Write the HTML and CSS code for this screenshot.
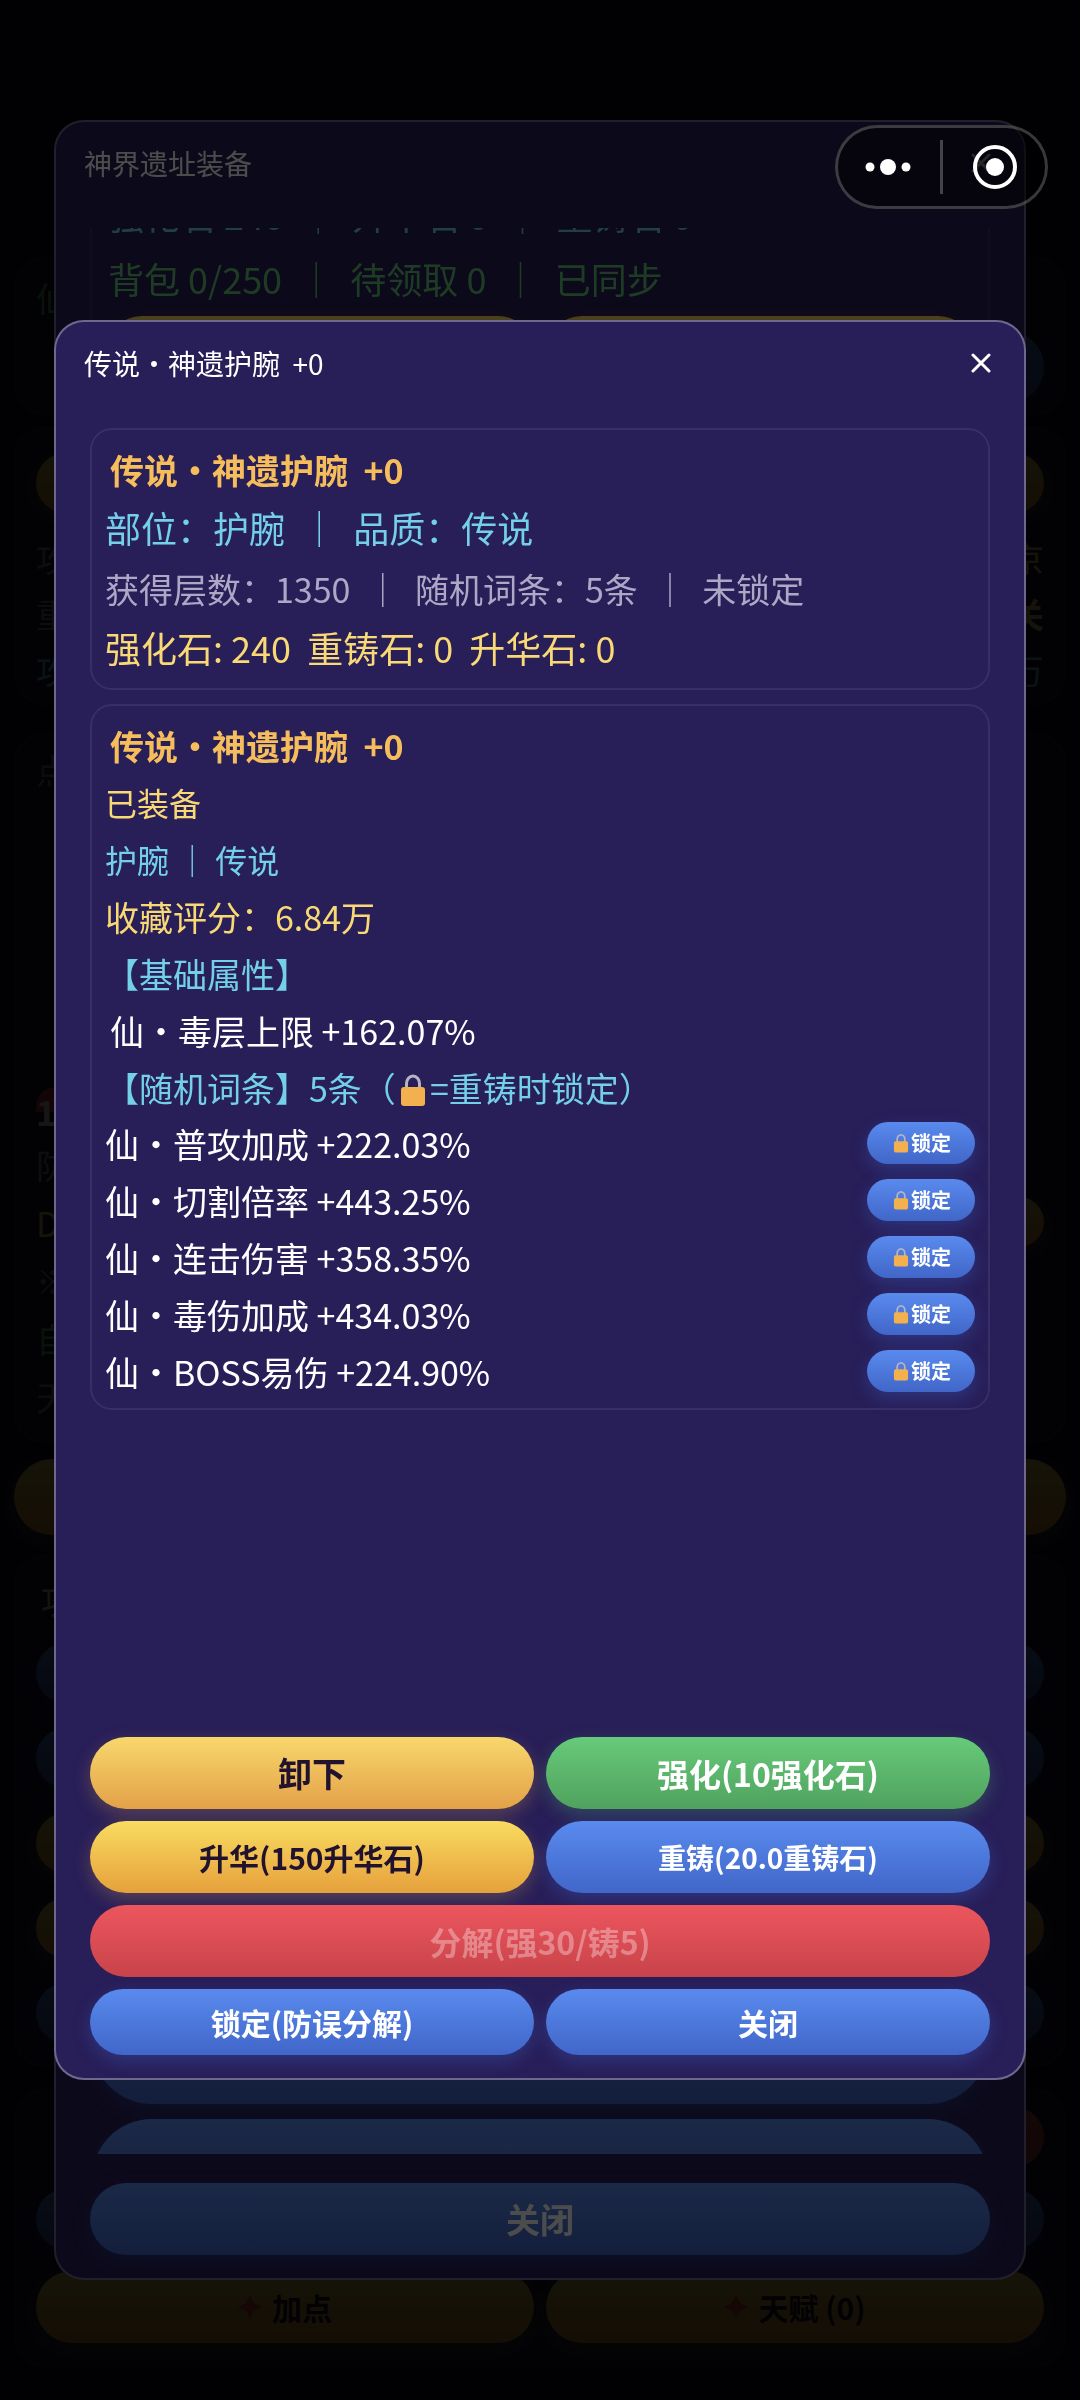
FILE: index.html
```html
<!DOCTYPE html>
<html lang="zh-CN">
<head>
<meta charset="utf-8">
<meta name="viewport" content="width=device-width, initial-scale=1">
<title>神界遗址装备</title>
<link rel="stylesheet" href="styles.css">
</head>
<body>
<svg class="defs" aria-hidden="true">
  <symbol id="lock" viewBox="0 0 34 34">
    <path d="M10.500 17V10.500a6.500 7.500 0 0 1 13 0V17" fill="none" stroke="#b4b4c4" stroke-width="3"/>
    <rect x="5" y="14" width="24" height="19" rx="3" fill="#f3b04e"/>
  </symbol>
  <symbol id="cross" viewBox="0 0 20 20">
    <path d="M2 2l16 16M18 2L2 18" stroke="#fff" stroke-width="3" stroke-linecap="round"/>
  </symbol>
  <symbol id="spark" viewBox="0 0 24 24">
    <path d="M12 0l4 8 8 4-8 4-4 8-4-8-8-4 8-4z" fill="#e0503c"/>
  </symbol>
</svg>

<main class="page">
  <section class="card card-hero">
    <div class="row green"><span>仙</span></div>
    <button class="btn blue side-btn" type="button" aria-label="详情"></button>
  </section>
  <section class="card card-stats">
    <button class="btn gold wide" type="button" aria-label="属性"></button>
    <div class="row"><span>攻</span><span class="yellow">京</span></div>
    <div class="row"><span>重</span><b class="yellow">关</b></div>
    <div class="row cyan"><span>攻</span><span>万</span></div>
  </section>
  <section class="card card-battle">
    <div class="row dim"><span>点</span></div>
    <div class="battle-rows">
      <div class="row rank-row"><b class="rank">1</b></div>
      <div class="row"><span>防</span></div>
      <div class="row yellow"><span>D</span><button class="btn gold mini" type="button" aria-label="查看"></button></div>
      <div class="row"><span>※</span></div>
      <div class="row green"><span>自</span></div>
      <div class="row dim"><span>天</span></div>
    </div>
  </section>
  <button class="btn gold banner" type="button" aria-label="挑战"></button>
  <section class="card card-menu">
    <div class="row yellow indent"><span>攻</span></div>
    <div class="menu">
      <button class="btn blue wide" type="button" aria-label="菜单一"></button>
      <button class="btn blue wide" type="button" aria-label="菜单二"></button>
      <button class="btn gold wide" type="button" aria-label="菜单三"></button>
      <button class="btn gold wide" type="button" aria-label="菜单四"></button>
      <button class="btn blue wide" type="button" aria-label="菜单五"></button>
    </div>
  </section>
  <section class="card card-growth">
    <button class="btn red side-btn" type="button" aria-label="重置"></button>
    <button class="btn blue wide" type="button" aria-label="成长"></button>
    <div class="pair">
      <button class="btn gold growth-btn" type="button"><svg><use href="#spark"/></svg>加点</button>
      <button class="btn gold growth-btn" type="button"><svg><use href="#spark"/></svg>天赋 (0)</button>
    </div>
  </section>
</main>

<div class="overlay">
  <section class="modal modal-list">
    <header class="modal-head">
      <h1>神界遗址装备</h1>
      <button class="close" type="button" aria-label="关闭列表"><svg><use href="#cross"/></svg></button>
    </header>
    <div class="list">
      <div class="summary">
        <p class="cyan">强化石 240  ｜  升华石 0  ｜  重铸石 0</p>
        <p class="green">背包 0/250  ｜  待领取 0  ｜  已同步</p>
        <div class="pair">
          <button class="btn gold" type="button" aria-label="整理"></button>
          <button class="btn gold" type="button" aria-label="领取"></button>
        </div>
      </div>
      <div class="slots">
        <button class="btn blue" type="button" aria-label="装备一"></button>
        <button class="btn blue" type="button" aria-label="装备二"></button>
      </div>
    </div>
    <footer class="actions"><button class="btn blue span t34" type="button">关闭</button></footer>
  </section>
</div>

<div class="overlay">
  <section class="modal modal-item" role="dialog" aria-labelledby="item-title">
    <header class="modal-head">
      <h2 id="item-title">传说・神遗护腕  +0</h2>
      <button class="close" type="button" aria-label="关闭窗口"><svg><use href="#cross"/></svg></button>
    </header>

    <div class="content">
      <div class="panel panel-brief">
        <h3>传说・神遗护腕  +0</h3>
        <p class="cyan t36">部位：护腕  ｜  品质：传说</p>
        <p class="meta">获得层数：1350  ｜  随机词条：5条  ｜  未锁定</p>
        <p class="yellow t36">强化石: 240  重铸石: 0  升华石: 0</p>
      </div>

      <div class="panel">
        <h3>传说・神遗护腕  +0</h3>
        <p class="yellow t32">已装备</p>
        <p class="cyan t32">护腕 ｜ 传说</p>
        <p class="yellow">收藏评分：6.84万</p>
        <p class="cyan">【基础属性】</p>
        <p class="indent">仙・毒层上限 +162.07%</p>
        <p class="cyan">【随机词条】5条（<svg class="lock-text" aria-label="锁"><use href="#lock"/></svg>=重铸时锁定）</p>
        <ul class="affixes">
          <li><span>仙・普攻加成 +222.03%</span><button class="btn blue lock" type="button"><svg><use href="#lock"/></svg>锁定</button></li>
          <li><span>仙・切割倍率 +443.25%</span><button class="btn blue lock" type="button"><svg><use href="#lock"/></svg>锁定</button></li>
          <li><span>仙・连击伤害 +358.35%</span><button class="btn blue lock" type="button"><svg><use href="#lock"/></svg>锁定</button></li>
          <li><span>仙・毒伤加成 +434.03%</span><button class="btn blue lock" type="button"><svg><use href="#lock"/></svg>锁定</button></li>
          <li><span>仙・BOSS易伤 +224.90%</span><button class="btn blue lock" type="button"><svg><use href="#lock"/></svg>锁定</button></li>
        </ul>
      </div>
    </div>

    <footer class="actions">
      <button class="btn amber t34" type="button">卸下</button>
      <button class="btn emerald t32" type="button">强化(10强化石)</button>
      <button class="btn gold" type="button">升华(150升华石)</button>
      <button class="btn blue t28" type="button">重铸(20.0重铸石)</button>
      <button class="btn red span t32" type="button" disabled>分解(强30/铸5)</button>
      <button class="btn blue short" type="button">锁定(防误分解)</button>
      <button class="btn blue short" type="button">关闭</button>
    </footer>
  </section>
</div>

<nav class="capsule" aria-label="小程序">
  <button type="button" aria-label="更多">
    <svg width="48" height="48" viewBox="0 0 48 48" fill="#fff"><circle cx="6" cy="24" r="4.500"/><circle cx="24" cy="24" r="8"/><circle cx="42" cy="24" r="4.500"/></svg>
  </button>
  <button type="button" aria-label="退出">
    <svg width="48" height="48" viewBox="0 0 48 48"><circle cx="24" cy="24" r="20" fill="none" stroke="#fff" stroke-width="4"/><circle cx="24" cy="24" r="9" fill="#fff"/></svg>
  </button>
</nav>
</body>
</html>
```

FILE: styles.css
```css
* { box-sizing: border-box; }

body {
  margin: 0;
  background: #140f32;
  color: #fff;
  font-family: "Noto Sans CJK SC", "Noto Sans", sans-serif;
  font-size: 34px;
}

h1, h2, h3, p, ul { margin: 0; padding: 0; }
ul { list-style: none; }
button { border: 0; padding: 0; background: none; color: inherit; font-family: inherit; }
.defs { position: absolute; width: 0; height: 0; }

/* text sizes */
.t32 { font-size: 32px; }
.t36 { font-size: 36px; }
.indent { padding-left: 5px; }

/* buttons */
.btn {
  height: 72px;
  border-radius: 60px;
  color: #fff;
  font-size: 30px;
  font-weight: 700;
  line-height: 1;
}
.btn.t28 { font-size: 28px; }
.btn.t32 { font-size: 32px; }
.btn.t34 { font-size: 34px; }
.blue { background: linear-gradient(#5a8aee, #4066c8); box-shadow: 0 6px 18px rgba(64, 110, 220, .3); }
.gold { background: linear-gradient(#f9dc60, #e6a03c); box-shadow: 0 6px 18px rgba(240, 180, 70, .25); color: #21122e; }
.amber { background: linear-gradient(#f8d76c, #e3a148); box-shadow: 0 6px 18px rgba(240, 180, 70, .25); color: #21122e; }
.emerald { background: linear-gradient(#67ca7a, #50a25e); box-shadow: 0 6px 18px rgba(80, 180, 110, .3); }
.red { background: linear-gradient(#ec565e, #c8434a); }
.red:disabled { color: rgba(255, 255, 255, .33); }

/* home page */
.page { padding: 257px 14px 35px; }
.card {
  display: flex;
  flex-direction: column;
  padding: 0 20px;
  border: 2px solid rgba(255, 255, 255, .06);
  border-radius: 30px;
  background: rgba(255, 255, 255, .03);
}
.row { display: flex; justify-content: space-between; align-items: center; height: 56px; color: #9a94b8; }
.wide { height: 60px; flex: none; }
.side-btn { width: 160px; height: 60px; align-self: flex-end; }
.mini { width: 120px; height: 50px; }
.rank-row.row { height: 48px; }
.rank { width: 40px; border-radius: 20px; background: linear-gradient(#d8403c 50%, transparent 50%); color: #fff; }
.card-hero { padding-top: 10px; padding-bottom: 10px; margin-bottom: 12px; gap: 6px; }
.card-hero .side-btn { height: 72px; }
.card-stats { padding-top: 24px; padding-bottom: 6px; margin-bottom: 28px; }
.card-stats .wide { margin-bottom: 16px; }
.card-battle { padding-top: 6px; padding-bottom: 16px; margin-bottom: 16px; gap: 290px; }
.battle-rows .row { height: 58px; }
.battle-rows .rank-row { height: 48px; }
.banner { display: block; width: 100%; height: 76px; margin-bottom: 20px; }
.card-menu { padding-top: 14px; padding-bottom: 22px; margin-bottom: 22px; gap: 16px; }
.card-menu .indent { padding-left: 5px; }
.menu { display: flex; flex-direction: column; gap: 25px; }
.card-growth { padding-top: 16px; padding-bottom: 22px; gap: 22px; }
.pair { display: grid; grid-template-columns: 1fr 1fr; gap: 12px; }
.growth-btn { display: flex; align-items: center; justify-content: center; gap: 10px; }
.growth-btn svg { width: 24px; height: 24px; }

/* text colours */
.yellow { color: #f9d976; }
.cyan { color: #74cfe8; }
.green { color: #66c878; }
.dim { color: #8c86a8; }

/* modals */
.overlay {
  position: fixed;
  inset: 0;
  display: flex;
  align-items: center;
  justify-content: center;
  background: rgba(0, 0, 0, .7);
}
.modal {
  display: flex;
  flex-direction: column;
  width: 90%;
  border: 2px solid rgba(255, 255, 255, .33);
  border-radius: 30px;
  background: #281e58;
  overflow: hidden;
}
.modal-list { height: 90vh; }
.modal-item { height: calc(90vh - 400px); }
.modal-head {
  display: flex;
  justify-content: space-between;
  align-items: center;
  height: 82px;
  margin-bottom: 24px;
  padding: 0 33px 0 28px;
  flex: none;
}
.modal-head h1, .modal-head h2 { font-size: 28px; font-weight: 400; white-space: pre; }
.close { display: flex; }
.close svg { width: 20px; height: 20px; }

.actions {
  display: grid;
  grid-template-columns: 1fr 1fr;
  gap: 12px;
  padding: 0 34px 23px;
  flex: none;
}
.span { grid-column: span 2; }
.short { height: 66px; }

/* equipment list */
.list {
  display: flex;
  flex: 1;
  flex-direction: column;
  justify-content: space-between;
  min-height: 0;
  margin: 0 34px 29px;
  overflow: hidden;
}
.summary {
  margin-top: -46px;
  padding: 0 14px;
  border: solid rgba(255, 255, 255, .08);
  border-width: 0 2px;
}
.summary p { padding-left: 2px; font-size: 36px; line-height: 64px; white-space: pre; }
.summary .pair { margin-top: 6px; }
.slots { display: grid; gap: 15px; margin-bottom: -85px; padding: 0 2px; }
.slots .btn { height: 120px; }

/* item details */
.content { flex: 1; padding: 0 34px; }
.panel {
  padding: 11px 13px 8px;
  border: 2px solid rgba(255, 255, 255, .08);
  border-radius: 22px;
  line-height: 57px;
}
.panel h3 { padding-left: 5px; color: #f6bd5c; font-size: 34px; font-weight: 700; white-space: pre; }
.panel p { white-space: pre; }
.panel-brief { margin-bottom: 14px; padding-bottom: 12px; }
.panel-brief p { line-height: 58px; }
.panel-brief .meta { margin-top: 4px; color: #aea8c6; }
.lock-text { width: 34px; height: 34px; vertical-align: -5px; }
.affixes { margin-top: -1px; }
.affixes li { display: flex; justify-content: space-between; align-items: center; height: 57px; }
.lock {
  display: flex;
  align-items: center;
  justify-content: center;
  width: 108px;
  height: 42px;
  margin-bottom: 2px;
  font-size: 20px;
}
.lock svg { width: 20px; height: 20px; }

/* mini-program capsule */
.capsule {
  position: fixed;
  top: 125px;
  right: 32px;
  display: grid;
  grid-template-columns: 102px 1fr;
  width: 213px;
  height: 84px;
  border: 3px solid rgba(255, 255, 255, .22);
  border-radius: 42px;
  background: rgba(0, 0, 0, .5);
}
.capsule button { display: flex; align-items: center; justify-content: center; margin: 12px 0; padding-right: 2px; }
.capsule button + button { padding: 0 0 0 2px; border-left: 3px solid rgba(255, 255, 255, .25); }
```
